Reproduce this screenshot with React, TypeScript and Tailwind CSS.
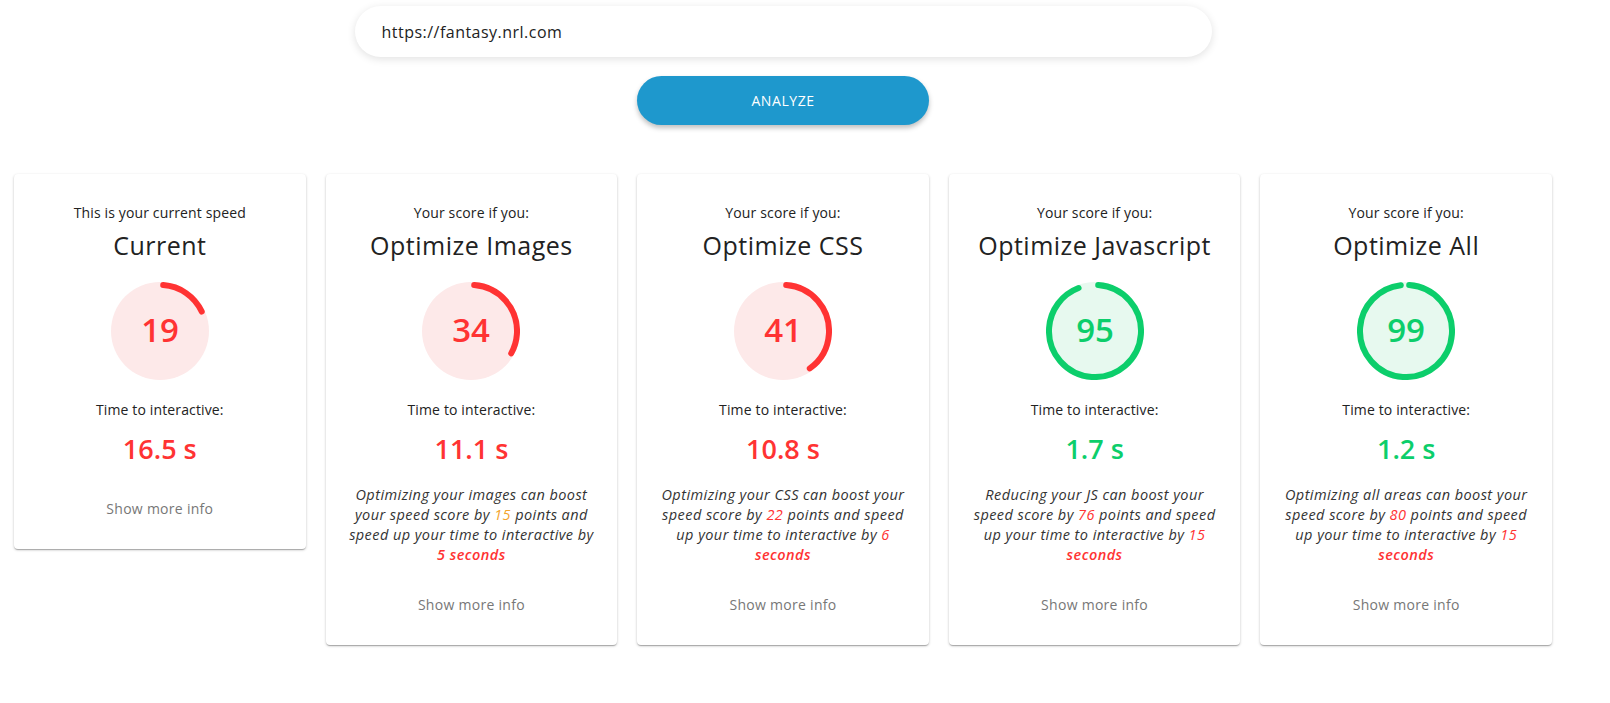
import React from 'react';

type Card = {
  subtitle: string;
  title: string;
  score: number;
  tti: string;
  desc?: React.ReactNode;
};

const RED = '#ff3333';
const GREEN = '#0cce6b';

const Gauge: React.FC<{ score: number }> = ({ score }) => {
  const good = score >= 90;
  const r = 46;
  const c = 2 * Math.PI * r;
  const len = (score / 100) * c;
  return (
    <svg width="98" height="98" viewBox="0 0 98 98" className="block">
      <circle cx="49" cy="49" r="49" fill={good ? '#e7f9ef' : '#fde9e9'} />
      <circle
        cx="49"
        cy="49"
        r={r}
        fill="none"
        stroke={good ? GREEN : RED}
        strokeWidth="6"
        strokeLinecap="round"
        strokeDasharray={`${Math.max(len - 6, 0)} ${c}`}
        transform="rotate(-86 49 49)"
      />
      <text
        x="49"
        y="51"
        textAnchor="middle"
        dominantBaseline="middle"
        fill={good ? GREEN : RED}
        fontSize="33"
        fontWeight="600"
        fontFamily="'Open Sans', sans-serif"
      >
        {score}
      </text>
    </svg>
  );
};

const Hi: React.FC<{ color?: string; bold?: boolean; children: React.ReactNode }> = ({ color = RED, bold, children }) => (
  <span style={{ color }} className={bold ? 'font-semibold whitespace-nowrap' : ''}>
    {children}
  </span>
);

const cards: Card[] = [
  { subtitle: 'This is your current speed', title: 'Current', score: 19, tti: '16.5 s' },
  {
    subtitle: 'Your score if you:',
    title: 'Optimize Images',
    score: 34,
    tti: '11.1 s',
    desc: (
      <>
        Optimizing your images can boost your speed score by <Hi color="#f4a52f">15</Hi> points and speed up your time to interactive by{' '}
        <Hi bold>5 seconds</Hi>
      </>
    ),
  },
  {
    subtitle: 'Your score if you:',
    title: 'Optimize CSS',
    score: 41,
    tti: '10.8 s',
    desc: (
      <>
        Optimizing your CSS can boost your speed score by <Hi>22</Hi> points and speed up your time to interactive by <Hi>6</Hi>{' '}
        <Hi bold>seconds</Hi>
      </>
    ),
  },
  {
    subtitle: 'Your score if you:',
    title: 'Optimize Javascript',
    score: 95,
    tti: '1.7 s',
    desc: (
      <>
        Reducing your JS can boost your speed score by <Hi>76</Hi> points and speed up your time to interactive by <Hi>15</Hi>{' '}
        <Hi bold>seconds</Hi>
      </>
    ),
  },
  {
    subtitle: 'Your score if you:',
    title: 'Optimize All',
    score: 99,
    tti: '1.2 s',
    desc: (
      <>
        Optimizing all areas can boost your speed score by <Hi>80</Hi> points and speed up your time to interactive by <Hi>15</Hi>{' '}
        <Hi bold>seconds</Hi>
      </>
    ),
  },
];

const ScoreCard: React.FC<{ card: Card }> = ({ card }) => {
  const good = card.score >= 90;
  return (
    <div className="bg-white rounded-[4px] shadow-[0_1px_3px_0_rgba(0,0,0,0.2),0_1px_1px_0_rgba(0,0,0,0.14),0_2px_1px_-1px_rgba(0,0,0,0.12)] flex flex-col items-center pt-[29px] pb-[30px] px-4 text-center">
      <p className="text-[14px] leading-[20px] tracking-[0.01em] text-[#222]">{card.subtitle}</p>
      <h2 className="mt-[6px] text-[25px] leading-[32px] tracking-[0.02em] text-[#222]">{card.title}</h2>
      <div className="mt-[21px]">
        <Gauge score={card.score} />
      </div>
      <p className="mt-[20px] text-[14px] leading-[20px] tracking-[0.01em] text-[#222]">Time to interactive:</p>
      <p className={`mt-[13px] text-[27px] leading-[32px] font-semibold ${good ? 'text-[#0cce6b]' : 'text-[#ff3333]'}`}>{card.tti}</p>
      {card.desc && (
        <p className="mt-[20px] text-[14.5px] leading-[20px] tracking-[0.03em] italic text-[#333]">{card.desc}</p>
      )}
      <p className={`${card.desc ? 'mt-[30px]' : 'mt-[34px]'} text-[14px] leading-[20px] tracking-[0.02em] text-[#777]`}>Show more info</p>
    </div>
  );
};

export default function App() {
  return (
    <div className="w-[1566px] bg-white min-h-[703px]" style={{ fontFamily: "'Open Sans', sans-serif" }}>
      <div className="flex flex-col items-center pt-[6px]">
        <div className="w-[857px] h-[51px] rounded-full bg-white shadow-[0_2px_8px_rgba(0,0,0,0.12)] flex items-center px-[27px]">
          <span className="text-[16px] tracking-[0.03em] text-[#222]">https://fantasy.nrl.com</span>
        </div>
        <button className="mt-[19px] w-[292px] h-[49px] rounded-full bg-[#1e98cd] text-white text-[14px] tracking-[0.04em] shadow-[0_3px_5px_rgba(0,0,0,0.25)]">
          ANALYZE
        </button>
      </div>
      <div className="grid grid-cols-5 gap-[20px] px-[14px] mt-[49px] items-start">
        {cards.map((c) => (
          <ScoreCard key={c.title} card={c} />
        ))}
      </div>
    </div>
  );
}
